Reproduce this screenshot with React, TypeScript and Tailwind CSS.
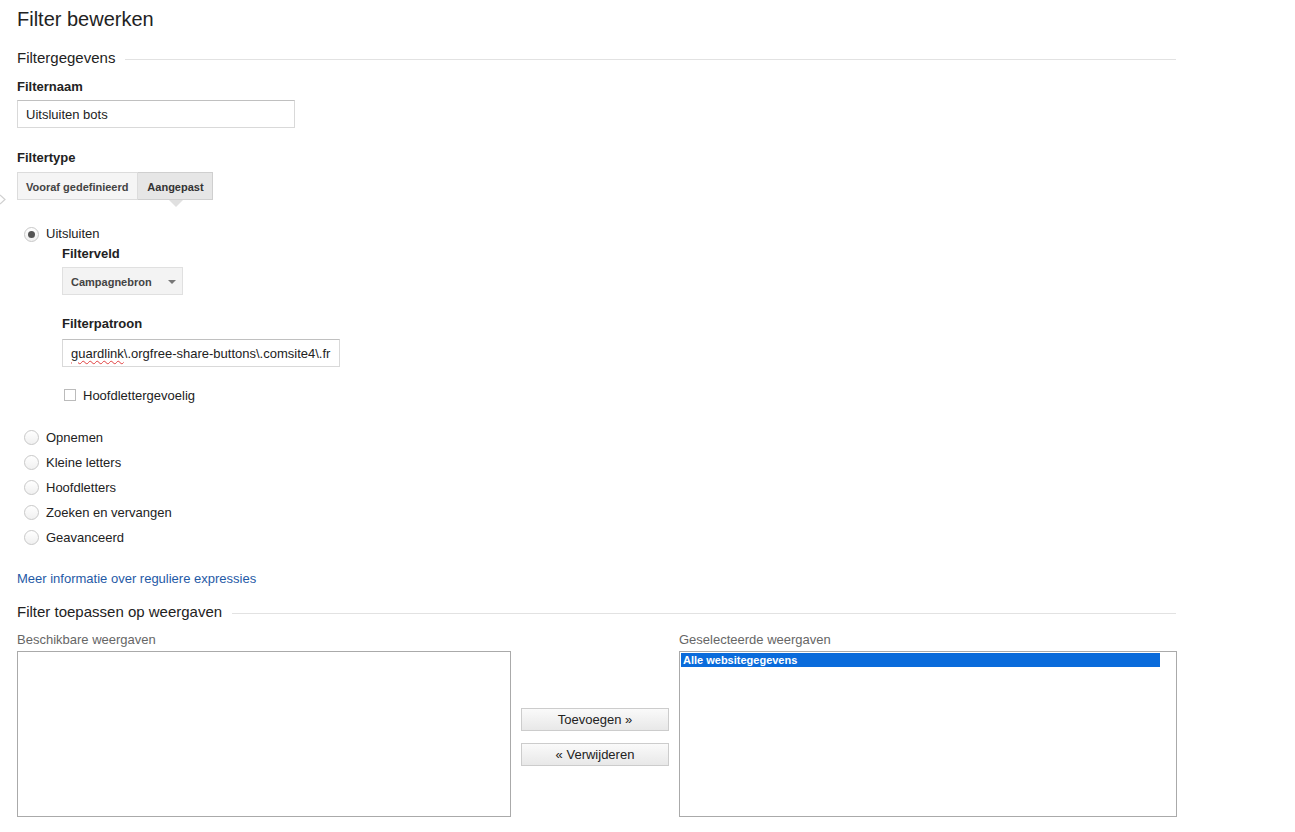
import React from "react";

const Radio = ({ checked, label }: { checked?: boolean; label: string }) => (
  <label className="flex items-center h-[25px]">
    <span className="w-[15px] h-[15px] rounded-full border border-[#c8c8c8] bg-gradient-to-b from-white to-[#f0f0f0] flex items-center justify-center ml-[24px] mr-[7px]">
      {checked && <span className="w-[7px] h-[7px] rounded-full bg-[#555]" />}
    </span>
    <span className="text-[13px] text-[#222]">{label}</span>
  </label>
);

const SectionTitle = ({ title }: { title: string }) => (
  <div className="flex items-center pr-[119px]">
    <span className="text-[15px] text-[#222] whitespace-nowrap">{title}</span>
    <span className="flex-1 h-px bg-[#e2e2e2] ml-[10px] mt-[3px]" />
  </div>
);

export default function App() {
  return (
    <div className="relative min-h-[832px] bg-white font-['Liberation_Sans',Arial,sans-serif] text-[#222] pl-[17px] pt-[7px]">
      <h1 className="text-[20px] leading-[24px] text-[#222]">Filter bewerken</h1>

      <div className="mt-[16px]">
        <SectionTitle title="Filtergegevens" />
      </div>

      <div className="mt-[9px] text-[13px] font-bold leading-[16px]">Filternaam</div>
      <div className="mt-[5px] w-[278px] h-[28px] border border-[#d9d9d9] border-t-[#c0c0c0] flex items-center px-[8px] pt-[2px] text-[13px]">
        Uitsluiten bots
      </div>

      <div className="mt-[22px] text-[13px] font-bold leading-[16px]">Filtertype</div>
      <div className="mt-[6px] flex">
        <div className="h-[28px] px-[8px] pr-[9px] pt-[3px] flex items-center border border-[#dcdcdc] bg-[#f5f5f5] text-[11px] font-bold text-[#444]">
          Vooraf gedefinieerd
        </div>
        <div className="relative h-[28px] w-[75px] pt-[3px] flex items-center justify-center border border-l-0 border-[#cfcfcf] bg-[#e6e6e6] text-[11px] font-bold text-[#333]">
          Aangepast
          <span className="absolute left-[31px] top-[27px] w-0 h-0 border-l-[7px] border-r-[7px] border-t-[7px] border-l-transparent border-r-transparent border-t-[#e0e0e0]" />
        </div>
      </div>
      <svg className="absolute left-0 top-[194px]" width="6" height="11" viewBox="0 0 6 11">
        <path d="M0 1 L5 5.5 L0 10" fill="none" stroke="#d0d0d0" strokeWidth="1.2" />
      </svg>

      <div className="mt-[22px] -ml-[17px]">
        <Radio checked label="Uitsluiten" />
      </div>
      <div className="pl-[45px]">
        <div className="text-[13px] font-bold leading-[16px] -mt-[1px]">Filterveld</div>
        <div className="mt-[5px] w-[121px] h-[28px] pt-[3px] border border-[#e0e0e0] bg-[#f3f3f3] flex items-center px-[8px] text-[11px] font-bold text-[#444]">
          Campagnebron
          <span className="ml-[16px] w-0 h-0 border-l-[4px] border-r-[4px] border-t-[4px] border-l-transparent border-r-transparent border-t-[#777]" />
        </div>

        <div className="mt-[21px] text-[13px] font-bold leading-[16px]">Filterpatroon</div>
        <div className="mt-[7px] w-[278px] h-[28px] border border-[#d9d9d9] border-t-[#c0c0c0] flex items-center px-[8px] pt-[2px] text-[13px] whitespace-nowrap overflow-hidden">
          <span className="underline decoration-wavy decoration-[#e04040] decoration-1 underline-offset-2">guardlink</span>
          \.orgfree-share-buttons\.comsite4\.fr
        </div>

        <label className="mt-[19px] flex items-center ml-[2px]">
          <span className="w-[12px] h-[12px] border border-[#bbb] bg-white" />
          <span className="ml-[7px] text-[13px]">Hoofdlettergevoelig</span>
        </label>
      </div>

      <div className="mt-[20px] -ml-[17px]">
        <Radio label="Opnemen" />
        <Radio label="Kleine letters" />
        <Radio label="Hoofdletters" />
        <Radio label="Zoeken en vervangen" />
        <Radio label="Geavanceerd" />
      </div>

      <a className="block mt-[19px] text-[13px] text-[#1f5aa6]">Meer informatie over reguliere expressies</a>

      <div className="mt-[12px]">
        <SectionTitle title="Filter toepassen op weergaven" />
      </div>

      <div className="mt-[9px] flex items-start">
        <div>
          <div className="text-[13px] text-[#666] leading-[16px]">Beschikbare weergaven</div>
          <div className="mt-[3px] w-[494px] h-[166px] border border-[#aaa]" />
        </div>
        <div className="ml-[10px] mt-[76px] flex flex-col gap-[12px]">
          <button className="w-[148px] h-[23px] border border-[#ccc] bg-gradient-to-b from-[#fafafa] to-[#e8e8e8] text-[13px] text-[#222]">
            Toevoegen »
          </button>
          <button className="w-[148px] h-[23px] border border-[#ccc] bg-gradient-to-b from-[#fafafa] to-[#e8e8e8] text-[13px] text-[#222]">
            « Verwijderen
          </button>
        </div>
        <div className="ml-[10px]">
          <div className="text-[13px] text-[#666] leading-[16px]">Geselecteerde weergaven</div>
          <div className="mt-[3px] w-[498px] h-[166px] border border-[#aaa] p-px">
            <div className="w-[479px] h-[14px] bg-[#0a6bdb] text-white text-[11px] font-bold leading-[14px] px-[2px]">
              Alle websitegegevens
            </div>
          </div>
        </div>
      </div>
    </div>
  );
}
